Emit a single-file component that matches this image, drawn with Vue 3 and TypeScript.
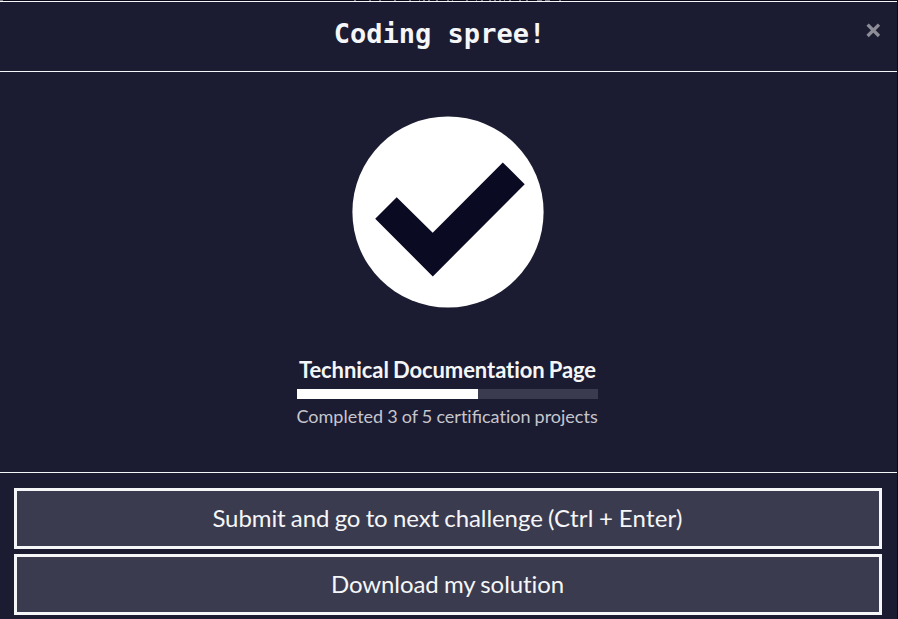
<script setup lang="ts">
import { computed, ref } from 'vue'

interface Action {
  label: string
  shortcut?: string
}

const completed = ref(3)
const total = ref(5)
const progress = computed(() => `${(completed.value / total.value) * 100}%`)
const actions: Action[] = [
  { label: 'Submit and go to next challenge', shortcut: '(Ctrl + Enter)' },
  { label: 'Download my solution' },
]
</script>

<template>
  <svg class="backdrop" width="898" height="1" viewBox="0 0 898 1" aria-hidden="true">
    <path d="M0 .5h3M354 .5h2M369 .5h2M379 .5h2M394 .5h2M409 .5h2M419 .5h1M423 .5h2M428 .5h2M436 .5h2M447 .5h2M452 .5h1M466 .5h2M476 .5h1M481 .5h2M489 .5h2M494 .5h2M499 .5h2M504 .5h1M509 .5h2M519 .5h2M526 .5h2M537 .5h5M545 .5h5M559 .5h2" />
  </svg>
  <main class="modal">
    <header class="header">
      <h1 class="title">Coding spree!</h1>
      <button class="close" aria-label="Close">
        <svg width="15" height="15" viewBox="0 0 15 15"><path d="M1.6 1.6L13 13M13 1.6L1.6 13" /></svg>
      </button>
    </header>
    <section class="body">
      <svg class="check" width="192" height="192" viewBox="0 0 192 192">
        <circle cx="96" cy="96" r="95.6" fill="#fff" />
        <path d="M23.2 102.8L44.7 81.2L80.7 116.8L150.8 46.4L172.7 68.3L80.8 160.4Z" fill="#0a0a23" />
      </svg>
      <div class="summary">
        <h2 class="project">Technical Documentation Page</h2>
        <div class="track"><div class="fill" :style="{ width: progress }"></div></div>
        <p class="status">Completed {{ completed }} of {{ total }} certi<span class="ligature">fi</span>cation projects</p>
      </div>
    </section>
    <footer class="footer">
      <button v-for="action in actions" :key="action.label" class="action">{{ action.label }}<template v-if="action.shortcut">{{ ' ' }}<span class="shortcut">{{ action.shortcut }}</span></template></button>
    </footer>
  </main>
</template>

<style>
body { background: #0a0a1a; overflow: hidden; }
</style>
<style scoped>
.backdrop { display: block; }
.backdrop path { stroke: #77777f; stroke-width: 1; }
.modal {
  box-sizing: border-box;
  width: 897px;
  height: 618px;
  border-top: 1px solid #f5f6f7;
  background: #1b1b32;
  font-family: Lato, sans-serif;
  font-variant-ligatures: none;
  color: #f5f6f7;
}
.header {
  box-sizing: border-box;
  height: 70px;
  display: grid;
  grid-template-columns: 1fr 18px;
  padding: 0 15px 0 14px;
  border-bottom: 1px solid #f5f6f7;
}
.title {
  margin: 0;
  padding: 15px 0 0 1px;
  font: bold 27px/34px "DejaVu Sans Mono", monospace;
  text-align: center;
}
.close {
  height: 15px;
  margin: 21px 0 0 2px;
  padding: 0;
  border: 0;
  background: none;
}
.close svg { display: block; }
.close path { stroke: #8d8d98; stroke-width: 3.3; fill: none; }
.body {
  box-sizing: border-box;
  height: 401px;
  display: flex;
  flex-direction: column;
  align-items: center;
  padding: 44px 1px 0 0;
  border-bottom: 1px solid #f5f6f7;
}
.check { display: block; flex: none; }
.summary { width: 301px; margin: 45px 1px 0 0; }
.project {
  margin: 0;
  font-size: 22px;
  line-height: 34px;
  font-weight: 700;
  letter-spacing: -0.08px;
  word-spacing: -1.1px;
  text-align: center;
  white-space: nowrap;
}
.track { height: 10px; margin-top: 2px; background: #3b3b4f; }
.fill { height: 10px; background: #fff; }
.status {
  width: max-content;
  margin: 4px 0 0 -0.5px;
  font-size: 18px;
  line-height: 27px;
  word-spacing: -0.5px;
  color: #c6c6cd;
  white-space: nowrap;
}
.ligature { font-variant-ligatures: common-ligatures; }
.footer {
  display: grid;
  gap: 5px;
  padding: 15px 15px 0 14px;
}
.action {
  height: 61px;
  padding: 0 1px 2px 0;
  border: 3px solid #f5f6f7;
  border-radius: 0;
  background: #3b3b4f;
  color: #f5f6f7;
  font: 24px/34px Lato, sans-serif;
  font-variant-ligatures: none;
  letter-spacing: -0.08px;
  word-spacing: -0.8px;
}
.shortcut { letter-spacing: 0.2px; }
</style>
